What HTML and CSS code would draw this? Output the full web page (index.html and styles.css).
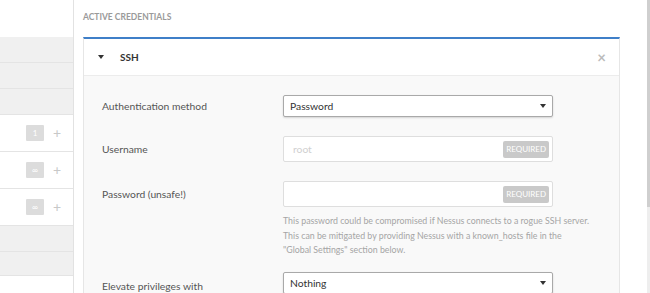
FILE: index.html
```html
<!DOCTYPE html>
<html lang="en">
<head>
    <meta charset="UTF-8">
    <title>Credentials</title>
    <link rel="stylesheet" href="styles.css">
</head>
<body>
    <div class="page">
        <div class="sidebar">
            <div class="side_row gray"></div>
            <div class="side_row gray"></div>
            <div class="side_row gray"></div>
            <div class="side_row item"><span class="count">1</span><span class="plus">+</span></div>
            <div class="side_row item"><span class="count">&infin;</span><span class="plus">+</span></div>
            <div class="side_row item"><span class="count">&infin;</span><span class="plus">+</span></div>
            <div class="side_row gray"></div>
            <div class="side_row gray last"></div>
        </div>

        <div class="main">
            <div class="section_title">Active Credentials</div>
            <div class="card">
                <div class="card_head">
                    <span class="caret"></span>
                    <span class="card_name">SSH</span>
                    <span class="close">&times;</span>
                </div>
                <div class="card_body">
                    <div class="field">
                        <label>Authentication method</label>
                        <div class="select">Password<span class="arrow"></span></div>
                    </div>
                    <div class="field">
                        <label>Username</label>
                        <div class="input"><span class="placeholder">root</span><span class="required">Required</span></div>
                    </div>
                    <div class="field top">
                        <label>Password (unsafe!)</label>
                        <div class="control">
                            <div class="input"><span class="placeholder"></span><span class="required">Required</span></div>
                            <p class="help">This password could be compromised if Nessus connects to a rogue SSH server.<br>
                            This can be mitigated by providing Nessus with a known_hosts file in the<br>
                            "Global Settings" section below.</p>
                        </div>
                    </div>
                    <div class="field elevate">
                        <label>Elevate privileges with</label>
                        <div class="select">Nothing<span class="arrow"></span></div>
                    </div>
                </div>
            </div>
        </div>

        <div class="scroll"><div class="thumb"></div></div>
    </div>
</body>
</html>
```

FILE: styles.css
```css
*{
    box-sizing: border-box;
}
body{
    margin: 0;
    font-family: Lato, "Open Sans", sans-serif;
    color: #555;
    background: #fff;
}
.page{
    display: flex;
    height: 293px;
    overflow: hidden;
}

/* 左側清單 */
.sidebar{
    width: 74px;
    flex: none;
    border-right: 1px solid #e2e2e2;
    padding-top: 37px;
}
.side_row{
    border-bottom: 1px solid #e4e4e4;
}
.gray{
    height: 26px;
    background: #f0f0f0;
}
.gray.last{
    height: 24px;
}
.item{
    height: 37px;
    display: flex;
    align-items: center;
    padding-left: 26px;
    background: #fff;
}
.count{
    width: 18px;
    height: 16px;
    background: #dcdcdc;
    color: #fff;
    font-size: 8px;
    text-align: center;
    line-height: 16px;
    border-radius: 1px;
}
.plus{
    margin-left: 9px;
    color: #c8c8c8;
    font-size: 14px;
    line-height: 1;
}

/* 右側內容 */
.main{
    flex: 1;
    padding: 0 0 0 9px;
}
.section_title{
    height: 37px;
    line-height: 35px;
    font-size: 8.5px;
    font-weight: bold;
    text-transform: uppercase;
    color: #9a9a9a;
}
.card{
    width: 537px;
    border: 1px solid #e6e6e6;
    border-top: 2px solid #3f7fc8;
    background: #f9f9f9;
    height: 260px;
}
.card_head{
    height: 37px;
    display: flex;
    align-items: center;
    background: #fff;
    border-bottom: 1px solid #ececec;
    padding: 0 13px 0 14px;
}
.caret{
    width: 0;
    height: 0;
    border-left: 3.5px solid transparent;
    border-right: 3.5px solid transparent;
    border-top: 4px solid #333;
}
.card_name{
    margin-left: 16px;
    font-size: 10px;
    font-weight: bold;
    color: #333;
    flex: 1;
}
.close{
    color: #bbb;
    font-size: 15px;
    font-weight: bold;
}
.card_body{
    padding: 19px 0 0 18px;
}
.field{
    display: flex;
    align-items: center;
    margin-bottom: 19px;
}
.field.top{
    align-items: flex-start;
}
.field.top label{
    padding-top: 7px;
}
.field label{
    width: 181px;
    font-size: 10.3px;
    color: #555;
}
.control{
    width: 270px;
}
.select{
    width: 270px;
    height: 22px;
    background: #fff;
    border: 1px solid #a9a9a9;
    border-radius: 2px;
    box-shadow: 0 1px 2px rgba(0,0,0,0.15);
    font-size: 10.3px;
    color: #333;
    padding: 0 6px;
    display: flex;
    align-items: center;
    justify-content: space-between;
}
.arrow{
    width: 0;
    height: 0;
    border-left: 3.5px solid transparent;
    border-right: 3.5px solid transparent;
    border-top: 4px solid #333;
}
.input{
    width: 270px;
    height: 26px;
    background: #fff;
    border: 1px solid #dedede;
    border-radius: 2px;
    display: flex;
    align-items: center;
    justify-content: space-between;
    padding: 0 3px 0 9px;
    font-size: 10.3px;
}
.placeholder{
    color: #d0d0d0;
}
.required{
    height: 17px;
    line-height: 17px;
    padding: 0 3px;
    background: #c9c9c9;
    color: #fff;
    font-size: 8px;
    text-transform: uppercase;
    border-radius: 2px;
}
.help{
    margin: 7px 0 0 0;
    width: 340px;
    font-size: 8.8px;
    line-height: 14.5px;
    color: #a5a5a5;
}
.elevate{
    margin-top: -5px;
    align-items: flex-start;
}
.elevate label{
    padding-top: 8px;
}

/* 捲軸 */
.scroll{
    width: 3px;
    flex: none;
    margin-left: auto;
    background: #eee;
}
.thumb{
    height: 207px;
    background: #cfcfcf;
}
```
